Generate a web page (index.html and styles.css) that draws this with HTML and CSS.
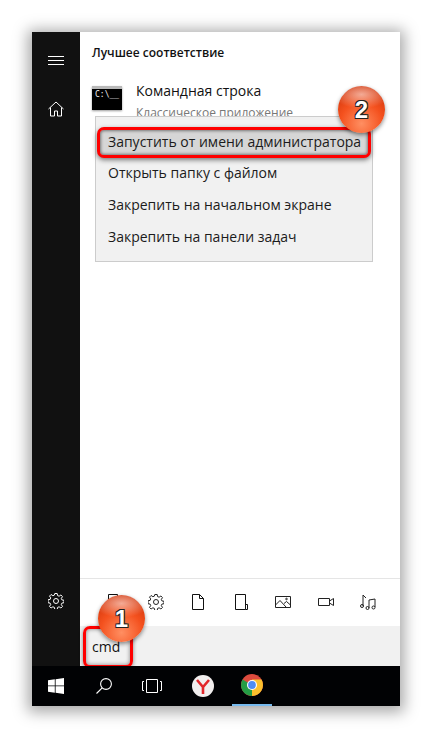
FILE: index.html
```html
<!DOCTYPE html>
<html lang="ru">
<head>
  <meta charset="UTF-8">
  <title>Командная строка</title>
  <link rel="stylesheet" href="styles.css">
</head>
<body>
  <div class="window">
    <div class="main">
      <div class="rail">
        <div class="rail-top">
          <svg class="rail-icon" width="16" height="16" viewBox="0 0 16 16" stroke="#fff" fill="none"><path d="M0 4.500h16M0 8.500h16M0 12.500h16"/></svg>
          <svg class="rail-icon" width="16" height="16" viewBox="0 0 16 16" stroke="#fff" fill="none"><path d="M.5 8 8 1l7.500 7M2.500 6.500v8.500h4v-5h3v5h4V6.500"/></svg>
        </div>
        <svg class="rail-icon" width="16" height="16" viewBox="0 0 16 16" stroke="#fff" fill="none"><circle cx="8" cy="8" r="2.500"/><path d="M6.800.5h2.400l.4 2.100 1.500.6 1.800-1.200 1.600 1.600-1.200 1.800.6 1.500 2.100.4v2.400l-2.100.4-.6 1.500 1.200 1.800-1.600 1.600-1.800-1.200-1.500.6-.4 2.100H6.800l-.4-2.100-1.500-.6-1.800 1.200-1.600-1.600 1.200-1.800-.6-1.500-2.100-.4V6.800l2.100-.4.6-1.500-1.200-1.800 1.600-1.600 1.800 1.200 1.500-.6z"/></svg>
      </div>
      <div class="content">
        <div class="results">
          <h2 class="results-title">Лучшее соответствие</h2>
          <div class="match">
            <div class="cmd-icon"><span class="cmd-prompt">C:\__</span></div>
            <div class="match-text">
              <div class="match-name">Командная строка</div>
              <div class="match-type">Классическое приложение</div>
            </div>
          </div>
          <ul class="context-menu">
            <li class="menu-item is-active">Запустить от имени администратора</li>
            <li class="menu-item">Открыть папку с файлом</li>
            <li class="menu-item">Закрепить на начальном экране</li>
            <li class="menu-item">Закрепить на панели задач</li>
          </ul>
          <div class="badge badge-two">2</div>
        </div>
        <div class="filters">
          <svg width="16" height="16" viewBox="0 0 16 16" fill="none" stroke="#111"><path d="M3.500.5h9v15h-9z"/></svg>
          <svg width="16" height="16" viewBox="0 0 16 16" stroke="#222" fill="none"><circle cx="8" cy="8" r="2.500"/><path d="M6.800.5h2.400l.4 2.100 1.500.6 1.800-1.200 1.600 1.600-1.200 1.800.6 1.500 2.100.4v2.400l-2.100.4-.6 1.500 1.200 1.800-1.600 1.600-1.800-1.200-1.500.6-.4 2.100H6.800l-.4-2.100-1.500-.6-1.800 1.200-1.600-1.600 1.200-1.800-.6-1.500-2.100-.4V6.800l2.100-.4.6-1.500-1.200-1.800 1.600-1.600 1.800 1.200 1.500-.6z"/></svg>
          <svg width="16" height="16" viewBox="0 0 16 16" fill="none" stroke="#111"><path d="M2.500.5h7l4 4v11h-11zM9.500.5v4h4"/></svg>
          <svg width="16" height="16" viewBox="0 0 16 16" fill="none" stroke="#111"><path d="M2.500.5h10v15h-10zM12.500 10.500h2v5h-2"/></svg>
          <svg width="16" height="16" viewBox="0 0 16 16" fill="none" stroke="#222"><path d="M.5 2.500h15v11H.5zM.5 11l4.500-4.500 6 6.500M9 9.500l2.500-2 4 3.500"/><circle cx="11.500" cy="5" r=".8"/></svg>
          <svg width="16" height="16" viewBox="0 0 16 16" fill="none" stroke="#222"><path d="M.5 4.500h11v7H.5zM11.500 7l4-2.500v7l-4-2.500"/></svg>
          <svg width="16" height="16" viewBox="0 0 16 16" fill="none" stroke="#222"><path d="M3 12V1l3 3M9 14V6l6-1v8"/><circle cx="2" cy="12" r="1.500"/><circle cx="7.500" cy="14" r="1.500"/><circle cx="13.500" cy="13.500" r="1.500"/></svg>
        </div>
        <div class="search">
          <span class="search-text">cmd</span>
          <div class="search-mark"></div>
          <div class="badge badge-one">1</div>
        </div>
      </div>
    </div>
    <div class="taskbar">
      <div class="task-btn">
        <svg width="16" height="16" viewBox="0 0 16 16" fill="#fff"><path d="M0 2.300 6.800 1.300v6.200H0zM7.600 1.200 16 0v7.500H7.600zM0 8.300h6.800v6.400L0 13.700zM7.600 8.300H16V16l-8.400-1.200z"/></svg>
      </div>
      <div class="task-btn">
        <svg width="16" height="16" viewBox="0 0 16 16" fill="none" stroke="#fff" stroke-width="1.100"><circle cx="10" cy="6" r="5.400"/><path d="M6.200 9.800.5 15.500"/></svg>
      </div>
      <div class="task-btn">
        <svg width="20" height="14" viewBox="0 0 20 14" fill="none" stroke="#fff"><path d="M4.500.5h11v13h-11zM2 2.500H.5v9H2M18 2.500h1.500v9H18"/></svg>
      </div>
      <div class="task-btn task-yandex">
        <svg width="22" height="22" viewBox="0 0 22 22"><circle cx="11" cy="11" r="11" fill="#f1eeee"/><path d="M5 5l6 7 6-7M11 12v7" fill="none" stroke="#e2262a" stroke-width="2.600"/></svg>
      </div>
      <div class="task-btn is-open">
        <svg width="22" height="22" viewBox="0 0 22 22">
          <circle cx="11" cy="11" r="11" fill="#dd4b3e"/>
          <path d="M11 11 1.500 5.500A11 11 0 0 0 11 22z" fill="#249d45"/>
          <path d="M11 11v11A11 11 0 0 0 20.500 5.500H11z" fill="#fbc02d"/>
          <circle cx="11" cy="11" r="5" fill="#fff"/>
          <circle cx="11" cy="11" r="3.900" fill="#4d8cf5"/>
        </svg>
      </div>
    </div>
  </div>
</body>
</html>
```

FILE: styles.css
```css
* {
  box-sizing: border-box;
}
body {
  margin: 0;
  padding: 32px;
  width: 432px;
  height: 738px;
  overflow: hidden;
  background-color: #fff;
  font-family: "Open Sans", "Noto Sans", sans-serif;
  color: #1b1b1b;
}
.window {
  width: 368px;
  height: 674px;
  display: flex;
  flex-direction: column;
  box-shadow: 0 2px 14px 4px rgba(0, 0, 0, 0.35);
}
.main {
  flex: 1;
  display: flex;
  min-height: 0;
}
.rail {
  width: 48px;
  background-color: #111;
  display: flex;
  flex-direction: column;
  justify-content: space-between;
  align-items: center;
  padding: 20px 0 57px;
}
.rail-top {
  display: flex;
  flex-direction: column;
  gap: 33px;
}
.rail-icon {
  display: block;
}
.content {
  flex: 1;
  display: flex;
  flex-direction: column;
  background-color: #fff;
}

/* results */
.results {
  flex: 1;
  position: relative;
  padding: 12px 12px 0;
}
.results-title {
  margin: 0;
  font-size: 12px;
  font-weight: 600;
  line-height: 17px;
  color: #111;
}
.match {
  display: flex;
  align-items: flex-start;
  gap: 14px;
  margin-top: 20px;
}
.cmd-icon {
  width: 30px;
  height: 24px;
  margin-top: 5px;
  background-color: #000;
  border-top: 3px solid #b9b9b9;
  box-shadow: 0 1px 2px rgba(0, 0, 0, 0.4);
  color: #eee;
  font-family: "DejaVu Sans Mono", monospace;
  font-size: 8px;
  line-height: 12px;
  padding-left: 3px;
}
.match-name {
  font-size: 14px;
  line-height: 20px;
  color: #111;
}
.match-type {
  margin-top: 3px;
  font-size: 12px;
  line-height: 17px;
  color: #777;
}
.context-menu {
  position: absolute;
  left: 15px;
  top: 84px;
  width: 278px;
  height: 146px;
  margin: 0;
  padding: 8px 0 0;
  list-style: none;
  background-color: #f1f1f1;
  border: 1px solid #ccc;
}
.menu-item {
  height: 32px;
  padding-left: 12px;
  font-size: 14px;
  line-height: 32px;
  white-space: nowrap;
  color: #1b1b1b;
}
.is-active {
  position: relative;
  z-index: 0;
  line-height: 34px;
}
.is-active::after {
  content: "";
  position: absolute;
  z-index: -1;
  left: 1px;
  right: 1px;
  top: 2px;
  bottom: -1px;
  background-color: #d6d6d6;
  border: 3px solid #f00;
  border-radius: 7px;
  box-shadow: 0 2px 5px rgba(0, 0, 0, 0.5), inset 0 0 3px 1px rgba(0, 0, 0, 0.45);
}
.badge {
  position: absolute;
  width: 47px;
  height: 47px;
  border-radius: 50%;
  background: radial-gradient(ellipse 60% 30% at 50% 18%, rgba(255, 255, 255, 0.55) 0, rgba(255, 255, 255, 0) 100%),
    radial-gradient(circle at 50% 80%, #ff8f62 0, #f4511e 48%, #c42a04 100%);
  box-shadow: 0 2px 4px rgba(0, 0, 0, 0.45);
  color: #fff;
  font-family: "Liberation Sans", sans-serif;
  font-size: 24px;
  font-weight: 700;
  line-height: 47px;
  text-align: center;
  text-shadow: -1px -1px 0 #222, 1px -1px 0 #222, -1px 1px 0 #222, 1px 1px 0 #222;
}
.badge-two {
  left: 258px;
  top: 54px;
}

/* filter row */
.filters {
  height: 48px;
  border-top: 1px solid #e5e5e5;
  display: flex;
  align-items: center;
  justify-content: space-between;
  padding: 0 24px 1px 25px;
}

/* search */
.search {
  height: 40px;
  position: relative;
  background-color: #f1f1f1;
  padding-left: 12px;
  font-size: 14px;
  line-height: 42px;
  color: #111;
}
.search-mark {
  position: absolute;
  left: 3px;
  top: 0;
  width: 50px;
  height: 42px;
  border: 3px solid #f00;
  border-radius: 7px;
  box-shadow: 0 1px 4px rgba(0, 0, 0, 0.45), inset 0 0 4px rgba(0, 0, 0, 0.45);
}
.badge-one {
  left: 18px;
  top: -31px;
}

/* taskbar */
.taskbar {
  height: 40px;
  background-color: #010204;
  display: flex;
  position: relative;
}
.task-btn {
  width: 48px;
  height: 40px;
  display: flex;
  align-items: center;
  justify-content: center;
}
.task-yandex {
  margin-left: 3px;
}
.is-open {
  width: 40px;
  margin-left: 5px;
  border-bottom: 2px solid #76b9ed;
}
```
